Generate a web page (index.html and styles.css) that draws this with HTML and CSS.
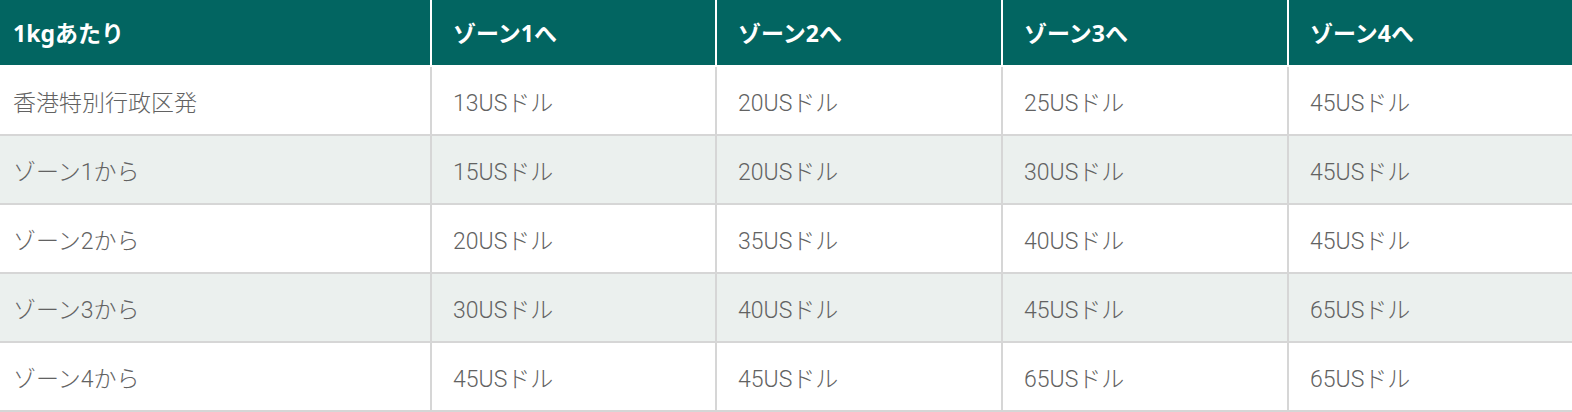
FILE: index.html
```html
<!DOCTYPE html>
<html lang="ja">
<head>
<meta charset="utf-8">
<title>料金表</title>
<link rel="stylesheet" href="styles.css">
</head>
<body>
<table class="rates">
  <thead>
    <tr>
      <th class="c1">1kgあたり</th>
      <th class="c2">ゾーン1へ</th>
      <th class="c3">ゾーン2へ</th>
      <th class="c4">ゾーン3へ</th>
      <th class="c5">ゾーン4へ</th>
    </tr>
  </thead>
  <tbody>
    <tr>
      <td>香港特別行政区発</td><td>13USドル</td><td>20USドル</td><td>25USドル</td><td>45USドル</td>
    </tr>
    <tr class="alt">
      <td>ゾーン1から</td><td>15USドル</td><td>20USドル</td><td>30USドル</td><td>45USドル</td>
    </tr>
    <tr>
      <td>ゾーン2から</td><td>20USドル</td><td>35USドル</td><td>40USドル</td><td>45USドル</td>
    </tr>
    <tr class="alt">
      <td>ゾーン3から</td><td>30USドル</td><td>40USドル</td><td>45USドル</td><td>65USドル</td>
    </tr>
    <tr>
      <td>ゾーン4から</td><td>45USドル</td><td>45USドル</td><td>65USドル</td><td>65USドル</td>
    </tr>
  </tbody>
</table>
</body>
</html>
```

FILE: styles.css
```css
html, body {
  margin: 0;
  padding: 0;
  background: #ffffff;
}

.rates {
  width: 1572px;
  border-collapse: separate;
  border-spacing: 0;
  table-layout: fixed;
  font-family: Roboto, "Noto Sans CJK JP", sans-serif;
}

.rates th {
  box-sizing: border-box;
  height: 67px;
  background: #026561;
  color: #ffffff;
  font-family: "Noto Sans", "Noto Sans CJK JP", sans-serif;
  font-weight: 700;
  font-size: 23px;
  text-align: left;
  vertical-align: middle;
  padding: 0 0 2px 21px;
  border-right: 2px solid #ffffff;
  border-bottom: 2px solid #ffffff;
}

.rates th.c1 { width: 432px; padding-left: 13px; }
.rates th.c2 { width: 285px; }
.rates th.c3 { width: 286px; }
.rates th.c4 { width: 286px; }
.rates th.c5 { width: 283px; border-right: 0; }

.rates td {
  box-sizing: border-box;
  height: 69px;
  color: #626262;
  font-size: 23px;
  font-weight: 300;
  text-align: left;
  vertical-align: middle;
  padding: 0 0 0 21px;
  border-right: 2px solid #d6d6d6;
  border-bottom: 2px solid #d6d6d6;
}

.rates td:first-child { padding-left: 13px; }
.rates td:last-child { border-right: 0; }

.rates tr.alt td { background: #ebf0ee; }
```
